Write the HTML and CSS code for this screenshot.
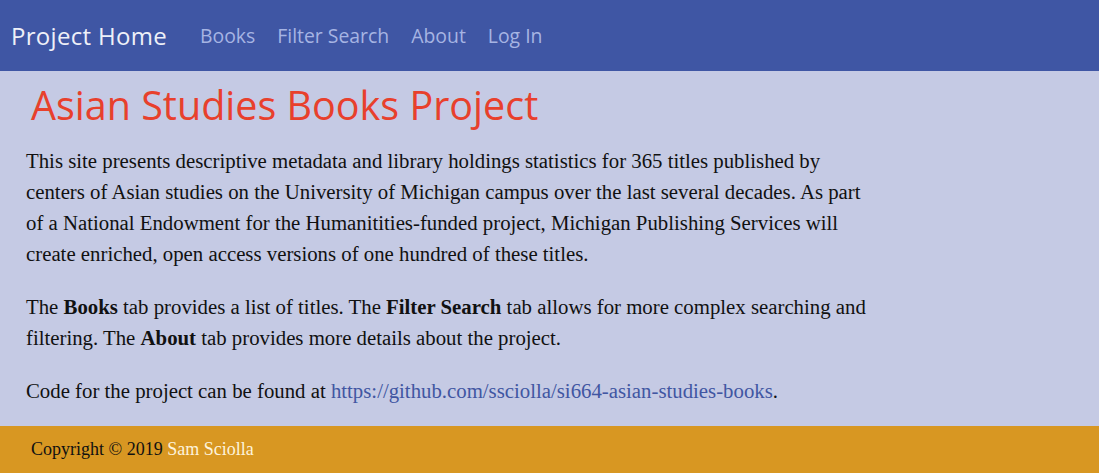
FILE: index.html
```html
<!DOCTYPE html>
<html>
<head>
<meta charset="utf-8">
<link rel="stylesheet" href="styles.css">
</head>
<body>
<nav class="navbar">
  <a class="brand" href="#">Project Home</a>
  <ul class="nav-links">
    <li><a href="#">Books</a></li>
    <li><a href="#">Filter Search</a></li>
    <li><a href="#">About</a></li>
    <li><a href="#">Log In</a></li>
  </ul>
</nav>
<main class="content">
  <h1 class="title">Asian Studies Books Project</h1>
  <p>This site presents descriptive metadata and library holdings statistics for 365 titles published by centers of Asian studies on the University of Michigan campus over the last several decades. As part of a National Endowment for the Humanitities-funded project, Michigan Publishing Services will create enriched, open access versions of one hundred of these titles.</p>
  <p>The <b>Books</b> tab provides a list of titles. The <b>Filter Search</b> tab allows for more complex searching and filtering. The <b>About</b> tab provides more details about the project.</p>
  <p class="last">Code for the project can be found at <a class="link" href="#">https://github.com/ssciolla/si664-asian-studies-books</a>.</p>
</main>
<footer class="footer">
  <span>Copyright © 2019 <a class="author" href="#">Sam Sciolla</a></span>
</footer>
</body>
</html>
```

FILE: styles.css
```css
html, body {
  margin: 0;
  padding: 0;
}
body {
  background: #c5cae4;
  font-family: "Liberation Serif", "Times New Roman", serif;
  color: #111;
  height: 473px;
  display: flex;
  flex-direction: column;
}
.navbar {
  background: #3f56a4;
  height: 71px;
  flex: none;
  display: flex;
  align-items: center;
  padding: 0 11px;
  box-sizing: border-box;
  font-family: "Open Sans", "Noto Sans", sans-serif;
}
.brand {
  color: #eef0f8;
  font-size: 24px;
  letter-spacing: 0.3px;
  text-decoration: none;
  margin-right: 33px;
}
.nav-links {
  list-style: none;
  display: flex;
  gap: 22px;
  margin: 0;
  padding: 0;
}
.nav-links a {
  color: #a6b4e3;
  font-size: 19.4px;
  text-decoration: none;
}
.content {
  flex: 1;
  min-height: 0;
  padding: 0 26px;
}
.title {
  font-family: "Open Sans", "Noto Sans", sans-serif;
  font-weight: 400;
  color: #e8402c;
  font-size: 39.5px;
  margin: 10px 0 16px 5px;
  line-height: 48px;
}
.content p {
  font-size: 20.8px;
  line-height: 31px;
  margin: 0 0 22px;
  max-width: 855px;
}
.content p.last {
  margin-bottom: 20px;
}
.link {
  color: #4156a2;
  text-decoration: none;
}
.footer {
  background: #d89722;
  height: 47px;
  flex: none;
  display: flex;
  align-items: center;
  padding: 0 31px;
  font-size: 18px;
  color: #111;
}
.author {
  color: #fdf3dc;
  text-decoration: none;
}
```
